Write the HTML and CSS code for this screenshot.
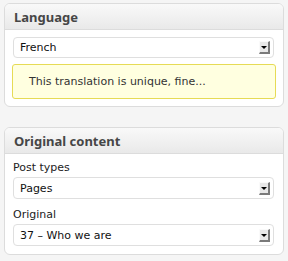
FILE: index.html
```html
<!DOCTYPE html>
<html>
<head>
<meta charset="utf-8">
<link rel="stylesheet" href="styles.css">
</head>
<body>
<div class="panel">
  <div class="panel-head">Language</div>
  <div class="panel-body">
    <div class="select"><span>French</span><span class="arrow"></span></div>
    <div class="notice">This translation is unique, fine...</div>
  </div>
</div>
<div class="panel second">
  <div class="panel-head">Original content</div>
  <div class="panel-body">
    <div class="label">Post types</div>
    <div class="select tall"><span>Pages</span><span class="arrow"></span></div>
    <div class="label">Original</div>
    <div class="select tall"><span>37 – Who we are</span><span class="arrow"></span></div>
  </div>
</div>
</body>
</html>
```
FILE: styles.css
```css
html, body { margin: 0; padding: 0; }
body {
  background: #f5f5f5;
  font-family: "DejaVu Sans", Verdana, sans-serif;
  color: #333;
  padding: 3px 4px 0 4px;
}
.panel {
  background: #fff;
  border: 1px solid #dcdcdc;
  border-radius: 6px;
  overflow: hidden;
}
.panel.second { margin-top: 20px; }
.panel-head {
  height: 25px;
  line-height: 26px;
  padding-left: 9px;
  font-family: "Noto Sans", "DejaVu Sans", sans-serif;
  font-size: 13px;
  font-weight: bold;
  color: #464646;
  background: linear-gradient(#f9f9f9, #e9e9e9);
  border-bottom: 1px solid #dcdcdc;
}
.panel-body {
  padding: 7px 7px 7px 7px;
  display: flex;
  flex-direction: column;
}
.second .panel-body { padding-bottom: 8px; }
.select {
  height: 19px;
  border: 1px solid #dfdfdf;
  border-radius: 4px;
  margin: 0 2px 0 1px;
  display: flex;
  align-items: center;
  justify-content: space-between;
  padding: 0 3px 0 6px;
  font-size: 11px;
  color: #111;
}
.select.tall { height: 20px; }
.arrow {
  width: 11px;
  height: 13px;
  box-sizing: border-box;
  background: #e8e8e8;
  border-right: 2px solid #7a7a7a;
  border-bottom: 2px solid #7a7a7a;
  border-top: 1px solid #fafafa;
  border-left: 1px solid #fafafa;
  position: relative;
}
.arrow::after {
  content: "";
  position: absolute;
  left: 1px;
  top: 4px;
  border-left: 3px solid transparent;
  border-right: 3px solid transparent;
  border-top: 3px solid #000;
}
.notice {
  margin-top: 6px;
  background: #ffffe0;
  border: 1px solid #e6db55;
  border-radius: 3px;
  height: 33px;
  line-height: 33px;
  padding-left: 16px;
  font-size: 11px;
  color: #333;
}
.label {
  font-size: 11px;
  margin: 0 0 2px 1px;
  line-height: 14px;
  color: #222;
}
.select + .label { margin-top: 9px; }
```
